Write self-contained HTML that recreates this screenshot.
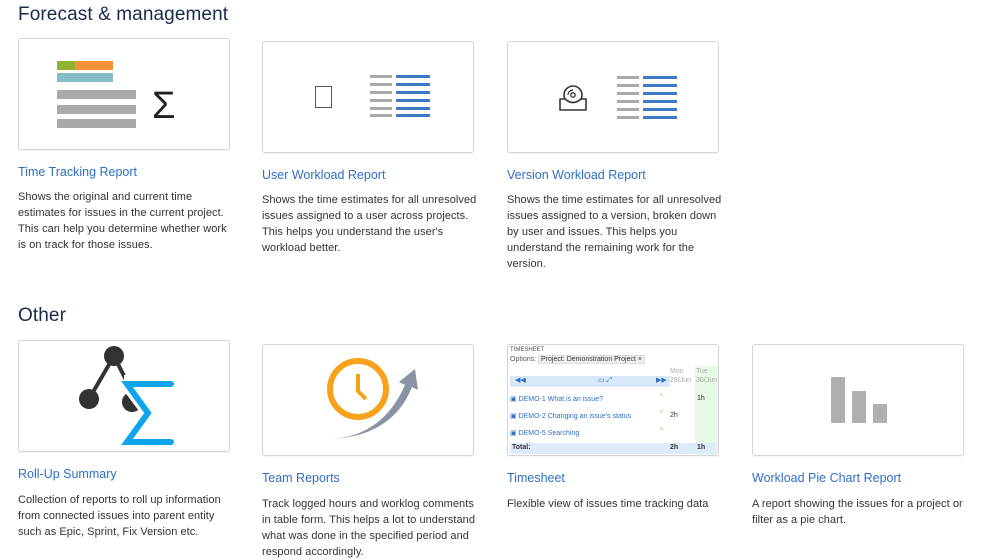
<!DOCTYPE html>
<html><head><meta charset="utf-8"><style>
body{margin:0;width:999px;height:552px;background:#fff;font-family:"Liberation Sans",sans-serif;position:relative;overflow:hidden;color:#172b4d}
.a{position:absolute}
h2{position:absolute;margin:0;font-size:19px;font-weight:normal;color:#172b4d;letter-spacing:0.1px}
.card{position:absolute;width:210px;height:110px;border:1px solid #d5d5d5;border-radius:3px;background:#fff;box-shadow:0 1px 1px rgba(0,0,0,.05);overflow:hidden}
.t{position:absolute;font-size:12.5px;color:#2f6fc4;white-space:nowrap}
.d{position:absolute;font-size:11px;letter-spacing:0.05px;line-height:16px;color:#333;white-space:nowrap}
.r{position:absolute;background:#a9a9a9}
.b{position:absolute;background:#3a7bc8}
</style></head><body>
<h2 style="left:18px;top:4px">Forecast &amp; management</h2>
<h2 style="left:18px;top:305px">Other</h2>

<div class="card" style="left:18px;top:38px">
 <div class="a" style="left:38px;top:22px;width:18px;height:9px;background:#8db42c"></div>
 <div class="a" style="left:56px;top:22px;width:38px;height:9px;background:#f5923a"></div>
 <div class="a" style="left:38px;top:34px;width:56px;height:9px;background:#86bcc6"></div>
 <div class="r" style="left:38px;top:51px;width:79px;height:9px"></div>
 <div class="r" style="left:38px;top:66px;width:79px;height:9px"></div>
 <div class="r" style="left:38px;top:80px;width:79px;height:9px"></div>
 <div class="a" style="left:133px;top:47px;font-size:38px;line-height:40px;color:#222">Σ</div>
</div>
<div class="t" style="left:18px;top:165px">Time Tracking Report</div>
<div class="d" style="left:18px;top:189px">Shows the original and current time<br>estimates for issues in the current project.<br>This can help you determine whether work<br>is on track for those issues.</div>

<div class="card" style="left:262px;top:41px">
 <div class="a" style="left:52px;top:44px;width:17px;height:22px;border:1px solid #555;box-sizing:border-box"></div>
 <div class="r" style="left:107px;top:33px;width:22px;height:3px"></div>
 <div class="r" style="left:107px;top:41px;width:22px;height:3px"></div>
 <div class="r" style="left:107px;top:49px;width:22px;height:3px"></div>
 <div class="r" style="left:107px;top:57px;width:22px;height:3px"></div>
 <div class="r" style="left:107px;top:65px;width:22px;height:3px"></div>
 <div class="r" style="left:107px;top:72px;width:22px;height:3px"></div>
 <div class="b" style="left:133px;top:33px;width:34px;height:3px"></div>
 <div class="b" style="left:133px;top:41px;width:34px;height:3px"></div>
 <div class="b" style="left:133px;top:49px;width:34px;height:3px"></div>
 <div class="b" style="left:133px;top:57px;width:34px;height:3px"></div>
 <div class="b" style="left:133px;top:65px;width:34px;height:3px"></div>
 <div class="b" style="left:133px;top:72px;width:34px;height:3px"></div>
</div>
<div class="t" style="left:262px;top:168px">User Workload Report</div>
<div class="d" style="left:262px;top:192px">Shows the time estimates for all unresolved<br>issues assigned to a user across projects.<br>This helps you understand the user's<br>workload better.</div>

<div class="card" style="left:507px;top:41px">
 <svg class="a" style="left:49px;top:40px" width="32" height="32" viewBox="0 0 32 32">
  <circle cx="16" cy="13" r="9" fill="#fff" stroke="#333" stroke-width="1.6"/>
  <circle cx="16" cy="13" r="2.2" fill="none" stroke="#333" stroke-width="1.3"/>
  <path d="M11 13 A5 5 0 0 1 16 8" fill="none" stroke="#333" stroke-width="1.2"/>
  <path d="M3 17 H8 Q16 24 24 17 H29 V28 H3 Z" fill="#fff" stroke="#333" stroke-width="1.6" stroke-linejoin="round"/>
 </svg>
 <div class="r" style="left:109px;top:34px;width:22px;height:3px"></div>
 <div class="r" style="left:109px;top:42px;width:22px;height:3px"></div>
 <div class="r" style="left:109px;top:50px;width:22px;height:3px"></div>
 <div class="r" style="left:109px;top:58px;width:22px;height:3px"></div>
 <div class="r" style="left:109px;top:66px;width:22px;height:3px"></div>
 <div class="r" style="left:109px;top:74px;width:22px;height:3px"></div>
 <div class="b" style="left:135px;top:34px;width:34px;height:3px"></div>
 <div class="b" style="left:135px;top:42px;width:34px;height:3px"></div>
 <div class="b" style="left:135px;top:50px;width:34px;height:3px"></div>
 <div class="b" style="left:135px;top:58px;width:34px;height:3px"></div>
 <div class="b" style="left:135px;top:66px;width:34px;height:3px"></div>
 <div class="b" style="left:135px;top:74px;width:34px;height:3px"></div>
</div>
<div class="t" style="left:507px;top:168px">Version Workload Report</div>
<div class="d" style="left:507px;top:192px">Shows the time estimates for all unresolved<br>issues assigned to a version, broken down<br>by user and issues. This helps you<br>understand the remaining work for the<br>version.</div>

<div class="card" style="left:18px;top:340px">
 <svg class="a" style="left:0;top:0" width="210" height="110" viewBox="0 0 210 110">
  <line x1="95" y1="15" x2="70" y2="58" stroke="#333" stroke-width="4"/>
  <line x1="95" y1="15" x2="110" y2="45" stroke="#333" stroke-width="4"/>
  <circle cx="95" cy="15" r="10" fill="#333"/>
  <circle cx="70" cy="58" r="10" fill="#333"/>
  <circle cx="113" cy="61" r="10" fill="#333"/>
  <path d="M105 40 L129 72 L105 104 M105 40 H160" fill="none" stroke="#fff" stroke-width="12"/>
  <path d="M152 43 H108 L129 72 L108 101 H152" fill="none" stroke="#0ea5ec" stroke-width="6" stroke-linecap="round" stroke-linejoin="miter"/>
 </svg>
</div>
<div class="t" style="left:18px;top:467px">Roll-Up Summary</div>
<div class="d" style="left:18px;top:492px">Collection of reports to roll up information<br>from connected issues into parent entity<br>such as Epic, Sprint, Fix Version etc.</div>

<div class="card" style="left:262px;top:344px">
 <svg class="a" style="left:0;top:0" width="210" height="110" viewBox="0 0 210 110">
  <path d="M70 94 Q120 90 142 40 L136 37 L152 24 L155 45 L149 42 Q130 90 70 94 Z" fill="#8a93a3"/>
  <circle cx="95" cy="44" r="28" fill="#fff" stroke="#f7a21b" stroke-width="6"/>
  <path d="M95 29 V46 L103 54" fill="none" stroke="#f7a21b" stroke-width="4"/>
 </svg>
</div>
<div class="t" style="left:262px;top:471px">Team Reports</div>
<div class="d" style="left:262px;top:496px">Track logged hours and worklog comments<br>in table form. This helps a lot to understand<br>what was done in the specified period and<br>respond accordingly.</div>

<div class="card" style="left:507px;top:344px;font-size:7px;color:#555">
 <div class="a" style="left:2px;top:2px;font-size:6px">TIMESHEET</div>
 <div class="a" style="left:2px;top:11px">Options: <span style="background:#eee;border:1px solid #ddd;padding:0 2px;color:#333">Project: Demonstration Project ×</span></div>
 <div class="a" style="left:2px;top:31px;width:160px;height:11px;background:#d9e8f8"></div>
 <div class="a" style="left:7px;top:31px;color:#2d6fc4;font-size:7px">◀◀</div>
 <div class="a" style="left:90px;top:31px;color:#2d6fc4">▭ ⤢</div>
 <div class="a" style="left:148px;top:31px;color:#2d6fc4">▶▶</div>
 <div class="a" style="left:162px;top:22px;color:#aaa;line-height:9px">Mon<br>29/Jun</div>
 <div class="a" style="left:187px;top:21px;width:23px;height:89px;background:#e6f9e6"></div>
 <div class="a" style="left:188px;top:22px;color:#aaa;line-height:9px">Tue<br>30/Jun</div>
 <div class="a" style="left:2px;top:50px;color:#2d6fc4">▣ DEMO-1 What is an issue?</div>
 <div class="a" style="left:2px;top:67px;color:#2d6fc4">▣ DEMO-2 Changing an issue's status</div>
 <div class="a" style="left:2px;top:84px;color:#2d6fc4">▣ DEMO-5 Searching</div>
 <div class="a" style="left:152px;top:48px;color:#f7a21b">*</div>
 <div class="a" style="left:152px;top:65px;color:#f7a21b">*</div>
 <div class="a" style="left:152px;top:82px;color:#f7a21b">*</div>
 <div class="a" style="left:189px;top:50px;color:#333">1h</div>
 <div class="a" style="left:162px;top:67px;color:#333">2h</div>
 <div class="a" style="left:2px;top:98px;width:206px;height:11px;background:#deebf9"></div>
 <div class="a" style="left:4px;top:99px;font-weight:bold;color:#333">Total:</div>
 <div class="a" style="left:162px;top:99px;font-weight:bold;color:#333">2h</div>
 <div class="a" style="left:189px;top:99px;font-weight:bold;color:#333">1h</div>
</div>
<div class="t" style="left:507px;top:471px">Timesheet</div>
<div class="d" style="left:507px;top:496px">Flexible view of issues time tracking data</div>

<div class="card" style="left:752px;top:344px">
 <div class="a" style="left:78px;top:32px;width:14px;height:46px;background:#afafaf"></div>
 <div class="a" style="left:99px;top:46px;width:14px;height:32px;background:#afafaf"></div>
 <div class="a" style="left:120px;top:59px;width:14px;height:19px;background:#afafaf"></div>
</div>
<div class="t" style="left:752px;top:471px">Workload Pie Chart Report</div>
<div class="d" style="left:752px;top:496px">A report showing the issues for a project or<br>filter as a pie chart.</div>
</body></html>
